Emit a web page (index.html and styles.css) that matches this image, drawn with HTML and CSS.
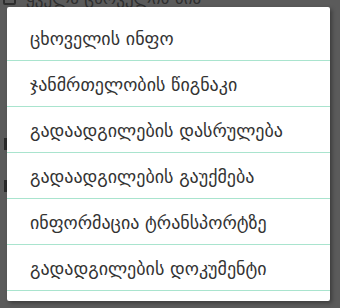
FILE: index.html
```html
<!DOCTYPE html>
<html lang="ka">
<head>
    <meta charset="UTF-8">
    <meta name="viewport" content="width=device-width, initial-scale=1.0">
    <title>მენიუ</title>
    <link rel="stylesheet" href="styles.css">
</head>
<body>
    <!-- ფონის გვერდი, რომელიც დიალოგის ქვეშ ჩანს -->
    <div class="backdrop">
        <div class="back-row">
            <span class="back-check"></span>
            <span class="back-text">ყველა ცხოველის სია</span>
        </div>
        <div class="back-mark mark-one"></div>
        <div class="back-mark mark-two"></div>
    </div>

    <div class="dialog">
        <ul class="menu">
            <li class="menu-item">ცხოველის ინფო</li>
            <li class="menu-item">ჯანმრთელობის წიგნაკი</li>
            <li class="menu-item">გადაადგილების დასრულება</li>
            <li class="menu-item">გადაადგილების გაუქმება</li>
            <li class="menu-item">ინფორმაცია ტრანსპორტზე</li>
            <li class="menu-item">გადადგილების დოკუმენტი</li>
        </ul>
    </div>
</body>
</html>
```

FILE: styles.css
```css
:root {
    --overlay: #5b5b5b;
    --divider: #a9e4ce;
    --text: #333;
    --dark: #2e2e2e;
}

* {
    box-sizing: border-box;
    margin: 0;
    padding: 0;
}

body {
    width: 340px;
    height: 308px;
    overflow: hidden;
    background: var(--overlay);
    font-family: "DejaVu Sans", "Noto Sans", sans-serif;
    position: relative;
}

/* ფონი */
.backdrop {
    height: 100%;
}

.back-row {
    display: flex;
    align-items: center;
    gap: 10px;
    padding: 0 0 0 3px;
    margin-top: -11px;
    height: 18px;
}

.back-check {
    width: 13px;
    height: 13px;
    border: 2px solid var(--dark);
    border-radius: 2px;
}

.back-text {
    color: var(--dark);
    font-size: 17px;
}

.back-mark {
    position: absolute;
    left: 4px;
    width: 3px;
    height: 12px;
    background: #2a2a2a;
}

.mark-one { top: 138px; }
.mark-two { top: 180px; }

/* დიალოგი */
.dialog {
    position: absolute;
    top: 7px;
    left: 7px;
    width: 323px;
    background: #fff;
    border-radius: 2px;
    padding: 8px 0 10px;
    box-shadow: 2px 2px 4px rgba(0,0,0,0.35);
}

.menu {
    list-style: none;
}

.menu-item {
    height: 46px;
    border-bottom: 1px solid var(--divider);
    padding: 0 0 0 23px;
    display: flex;
    align-items: center;
    color: var(--text);
    font-size: 18px;
    line-height: 1;
    padding-top: 2px;
}
```
